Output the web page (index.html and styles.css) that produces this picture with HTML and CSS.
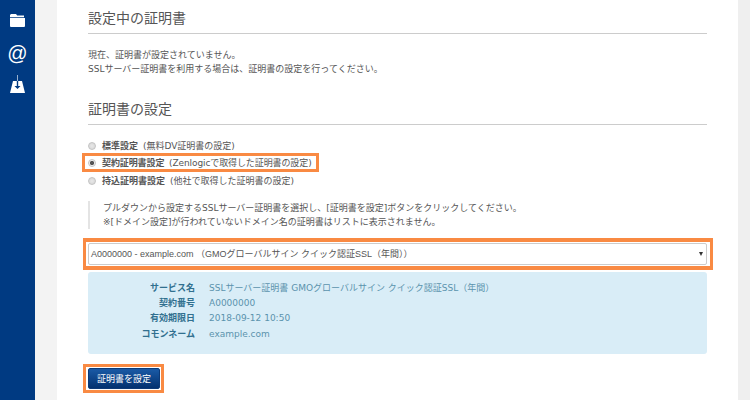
FILE: index.html
```html
<!DOCTYPE html>
<html lang="ja">
<head>
<meta charset="utf-8">
<title>証明書の設定</title>
<link rel="stylesheet" href="styles.css">
</head>
<body>
<div class="page">
  <nav class="sidebar">
    <svg class="icon" width="15" height="13" viewBox="0 0 15 13"><path fill="#fff" d="M1 0h5l1.2 1.6H14v1.6H0V1z M0 4h15v8a1 1 0 0 1-1 1H1a1 1 0 0 1-1-1z"/></svg>
    <span class="at">@</span>
    <svg class="icon" width="15" height="18" viewBox="0 0 15 18"><rect fill="#fff" x="7.1" y="0" width="0.8" height="6" opacity=".75"/><path fill="#fff" d="M3 6h9l3 12H0z"/><path fill="#003a82" d="M6.8 6h1.4v5H10.5L7.5 14 4.5 11H6.8z"/></svg>
  </nav>
  <div class="gutter"></div>
  <main class="content">
    <h2 class="heading first">設定中の証明書</h2>
    <p class="note">現在、証明書が設定されていません。<br>SSLサーバー証明書を利用する場合は、証明書の設定を行ってください。</p>
    <h2 class="heading second">証明書の設定</h2>
    <div class="radios">
      <label class="radio"><input type="radio" name="cert"><b>標準設定</b> (無料DV証明書の設定)</label>
      <label class="radio radio-mark"><input type="radio" name="cert" checked><b>契約証明書設定</b> (Zenlogicで取得した証明書の設定)</label>
      <label class="radio"><input type="radio" name="cert"><b>持込証明書設定</b> (他社で取得した証明書の設定)</label>
    </div>
    <blockquote class="quote">プルダウンから設定するSSLサーバー証明書を選択し、[証明書を設定]ボタンをクリックしてください。<br>※[ドメイン設定]が行われていないドメイン名の証明書はリストに表示されません。</blockquote>
    <div class="select-mark">
      <div class="select"><span>A0000000 - example.com （GMOグローバルサイン クイック認証SSL（年間））</span><i class="caret"></i></div>
    </div>
    <dl class="info">
      <dt>サービス名</dt><dd>SSLサーバー証明書 GMOグローバルサイン クイック認証SSL（年間）</dd>
      <dt>契約番号</dt><dd>A0000000</dd>
      <dt>有効期限日</dt><dd>2018-09-12 10:50</dd>
      <dt>コモンネーム</dt><dd>example.com</dd>
    </dl>
    <div class="btn-mark"><button class="btn" type="button">証明書を設定</button></div>
  </main>
  <div class="edge"></div>
</div>
</body>
</html>
```
FILE: styles.css
```css
* { box-sizing: border-box; }
html, body { margin: 0; height: 100%; }
body {
  overflow: hidden;
  background: #fff;
  color: #555;
  font-family: "DejaVu Sans", "Noto Sans CJK JP", sans-serif;
  font-size: 9px;
  line-height: 14px;
}
.page { display: flex; height: 400px; }
.sidebar {
  width: 35px;
  flex: none;
  background: #003a82;
  display: flex;
  flex-direction: column;
  align-items: center;
  padding-top: 14px;
}
.icon { display: block; flex: none; }
.at {
  color: #fff;
  font-family: "Liberation Sans", sans-serif;
  font-size: 20px;
  line-height: 20px;
  margin: 16px 0 12px;
}
.gutter { width: 22px; flex: none; background: #f3f3f3; }
.content { width: 681px; flex: none; padding: 0 31px; }
.edge { flex: 1; background: #efefef; }
.heading {
  margin: 0;
  font-size: 14px;
  font-weight: normal;
  line-height: 20px;
  color: #555;
  border-bottom: 1px solid #ccc;
  padding-bottom: 5px;
}
.first { padding-top: 8px; }
.note { margin: 14px 0 0; }
.second { margin-top: 23px; }
.radios { margin-top: 12px; }
.radio { display: flex; align-items: center; height: 17.5px; white-space: pre-wrap; width: max-content; }
.radio input {
  appearance: none;
  width: 8px;
  height: 8px;
  margin: 0 6px 0 0;
  flex: none;
  border: 1px solid #c4c4c4;
  border-radius: 50%;
  background: radial-gradient(circle, #e8e8e8, #d4d4d4);
}
.radio input:checked { background: radial-gradient(circle, #555 0 1.8px, #eee 2.4px); }
.radio b { font-weight: bold; margin-right: 2px; }
.radio-mark {
  height: 19px;
  margin: -1.5px 0 -0.25px -6px;
  padding: 0 4px 0 3px;
  border: 3px solid #f98a43;
  letter-spacing: -0.1px;
}
.quote {
  margin: 11.75px 0 0;
  padding: 0 0 0 13px;
  border-left: 2px solid #e4e4e4;
}
.select-mark {
  margin: 9px -6px 0 -5px;
  padding: 1px 3px 1px 2px;
  border-style: solid;
  border-color: #f98a43;
  border-width: 4px 3px;
}
.select {
  height: 22px;
  display: flex;
  align-items: center;
  justify-content: space-between;
  padding: 0 3px 0 2px;
  background: #fff;
  border: 1px solid #ccc;
  border-radius: 2px;
  font-family: "Liberation Sans", "Noto Sans CJK JP", sans-serif;
}
.caret {
  border-left: 2.5px solid transparent;
  border-right: 2.5px solid transparent;
  border-top: 4px solid #333;
}
.info {
  margin: 2px 0 0;
  height: 82px;
  padding: 8.5px 0 0;
  background: #d9edf7;
  border-radius: 3px;
  color: #5b93ad;
  display: grid;
  grid-template-columns: 107px 1fr;
  grid-auto-rows: 15.4px;
  column-gap: 14px;
  align-content: start;
}
.info dt { text-align: right; font-weight: bold; color: #31708f; }
.info dd { margin: 0; }
.btn-mark {
  width: 81px;
  margin: 10px 0 0 -5px;
  padding: 1px 1px 1px 2px;
  border: 3px solid #f98a43;
}
.btn {
  display: block;
  width: 72px;
  height: 21px;
  padding: 0;
  color: #fff;
  font: inherit;
  border: 1px solid #0d3a78;
  border-radius: 2px;
  background: linear-gradient(#1a5aa6, #03316f);
}
```
